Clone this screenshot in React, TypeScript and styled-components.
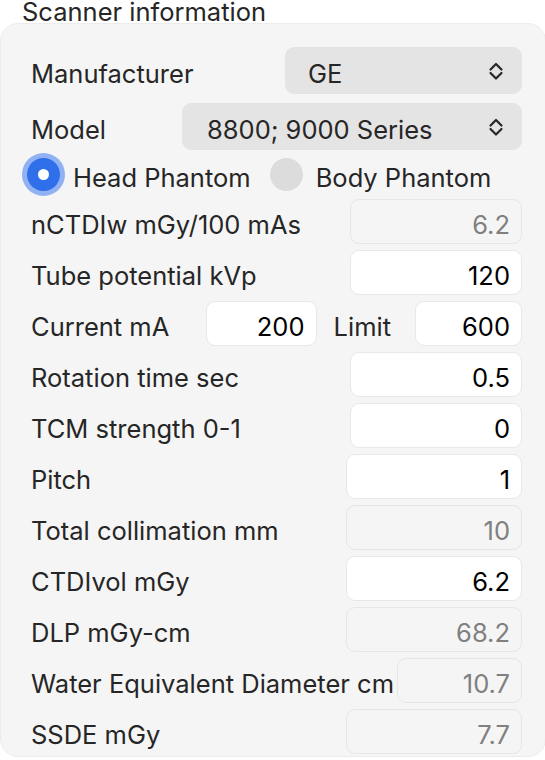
import React from "react";
import styled, { createGlobalStyle } from "styled-components";

const GlobalStyle = createGlobalStyle`
  html, body {
    margin: 0;
    padding: 0;
    background: #ffffff;
  }
  body {
    font-family: Inter, "Noto Sans", "Liberation Sans", sans-serif;
    color: #262626;
    -webkit-font-smoothing: antialiased;
  }
`;

const Page = styled.div`
  width: 545px;
  height: 760px;
  overflow: hidden;
`;

const Title = styled.div`
  height: 23px;
  line-height: 24px;
  padding-left: 22px;
  font-size: 25.5px;
  color: #262626;
  white-space: nowrap;
`;

const Panel = styled.div`
  box-sizing: border-box;
  width: 546px;
  height: 734px;
  background: #f5f5f5;
  border: 1px solid #ececec;
  border-radius: 18px;
  padding: 23px 23px 0 30px;
  display: flex;
  flex-direction: column;
  gap: 6px;
`;

const PopupGroup = styled.div`
  display: flex;
  flex-direction: column;
  gap: 9px;
`;

const Row = styled.div<{ $h?: number }>`
  display: flex;
  align-items: center;
  justify-content: space-between;
  height: ${(p) => p.$h ?? 45}px;
`;

/* macOS draws its text a little below the box centre */
const Label = styled.span`
  font-size: 25.5px;
  color: #262626;
  white-space: nowrap;
  padding-top: 6px;
`;

const Popup = styled.div<{ $w: number; $pad: number }>`
  box-sizing: border-box;
  width: ${(p) => p.$w}px;
  height: 47px;
  border-radius: 9px;
  background: #e4e4e4;
  display: flex;
  align-items: center;
  justify-content: space-between;
  padding: 0 18px 0 ${(p) => p.$pad}px;
  font-size: 25.5px;
  color: #262626;

  span {
    padding-top: 6px;
  }
`;

const Field = styled.div<{ $w: number; $disabled?: boolean }>`
  box-sizing: border-box;
  width: ${(p) => p.$w}px;
  height: 45px;
  border-radius: 9px;
  border: 1px solid ${(p) => (p.$disabled ? "#e6e6e6" : "#e8e8e8")};
  background: ${(p) => (p.$disabled ? "#f5f5f5" : "#ffffff")};
  color: ${(p) => (p.$disabled ? "#808080" : "#000000")};
  font-size: 25.5px;
  display: flex;
  align-items: center;
  justify-content: flex-end;
  padding: 5px 11px 0 0;
`;

const Group = styled.div`
  display: flex;
  align-items: center;
`;

const InlineLabel = styled(Label)`
  margin: 0 24px 0 17px;
`;

const RadioRow = styled.div`
  display: flex;
  align-items: center;
  height: 37px;
  margin-left: -4px;
`;

const RadioOption = styled.div<{ $gap: number }>`
  display: flex;
  align-items: center;
  gap: ${(p) => p.$gap}px;
  margin-right: 19px;
`;

const RadioDot = styled.span<{ $checked?: boolean }>`
  box-sizing: border-box;
  flex: none;
  width: 33px;
  height: 33px;
  border-radius: 50%;
  background: ${(p) => (p.$checked ? "#2f6fe9" : "#dcdcdc")};
  box-shadow: ${(p) => (p.$checked ? "0 0 0 5px #90b1f4" : "none")};
  display: flex;
  align-items: center;
  justify-content: center;
  &::after {
    content: "";
    display: ${(p) => (p.$checked ? "block" : "none")};
    width: 11px;
    height: 11px;
    border-radius: 50%;
    background: #ffffff;
  }
`;

const Chevrons = () => (
  <svg width="16" height="24" viewBox="0 0 16 24" fill="none">
    <path d="M2.5 10.5 L8 5 L13.5 10.5" stroke="#262626" strokeWidth="2.2" strokeLinecap="round" strokeLinejoin="round" />
    <path d="M2.5 14 L8 19.5 L13.5 14" stroke="#262626" strokeWidth="2.2" strokeLinecap="round" strokeLinejoin="round" />
  </svg>
);

type FieldRow = { label: string; value: string; w: number; disabled?: boolean };

const topFields: FieldRow[] = [
  { label: "nCTDIw mGy/100 mAs", value: "6.2", w: 172, disabled: true },
  { label: "Tube potential kVp", value: "120", w: 172 },
];

const bottomFields: FieldRow[] = [
  { label: "Rotation time sec", value: "0.5", w: 172 },
  { label: "TCM strength 0-1", value: "0", w: 172 },
  { label: "Pitch", value: "1", w: 176 },
  { label: "Total collimation mm", value: "10", w: 176, disabled: true },
  { label: "CTDIvol mGy", value: "6.2", w: 176 },
  { label: "DLP mGy-cm", value: "68.2", w: 176, disabled: true },
  { label: "Water Equivalent Diameter cm", value: "10.7", w: 125, disabled: true },
  { label: "SSDE mGy", value: "7.7", w: 176, disabled: true },
];

const renderField = (f: FieldRow) => (
  <Row key={f.label}>
    <Label>{f.label}</Label>
    <Field $w={f.w} $disabled={f.disabled}>
      {f.value}
    </Field>
  </Row>
);

export default function App() {
  return (
    <Page>
      <GlobalStyle />
      <Title>Scanner information</Title>
      <Panel>
        <PopupGroup>
          <Row $h={47}>
            <Label>Manufacturer</Label>
            <Popup $w={237} $pad={23}>
              <span>GE</span>
              <Chevrons />
            </Popup>
          </Row>
          <Row $h={47}>
            <Label>Model</Label>
            <Popup $w={340} $pad={25}>
              <span>8800; 9000 Series</span>
              <Chevrons />
            </Popup>
          </Row>
        </PopupGroup>
        <RadioRow>
          <RadioOption $gap={13}>
            <RadioDot $checked />
            <Label>Head Phantom</Label>
          </RadioOption>
          <RadioOption $gap={13}>
            <RadioDot />
            <Label>Body Phantom</Label>
          </RadioOption>
        </RadioRow>
        {topFields.map(renderField)}
        <Row>
          <Label>Current mA</Label>
          <Group>
            <Field $w={111}>200</Field>
            <InlineLabel>Limit</InlineLabel>
            <Field $w={107}>600</Field>
          </Group>
        </Row>
        {bottomFields.map(renderField)}
      </Panel>
    </Page>
  );
}
